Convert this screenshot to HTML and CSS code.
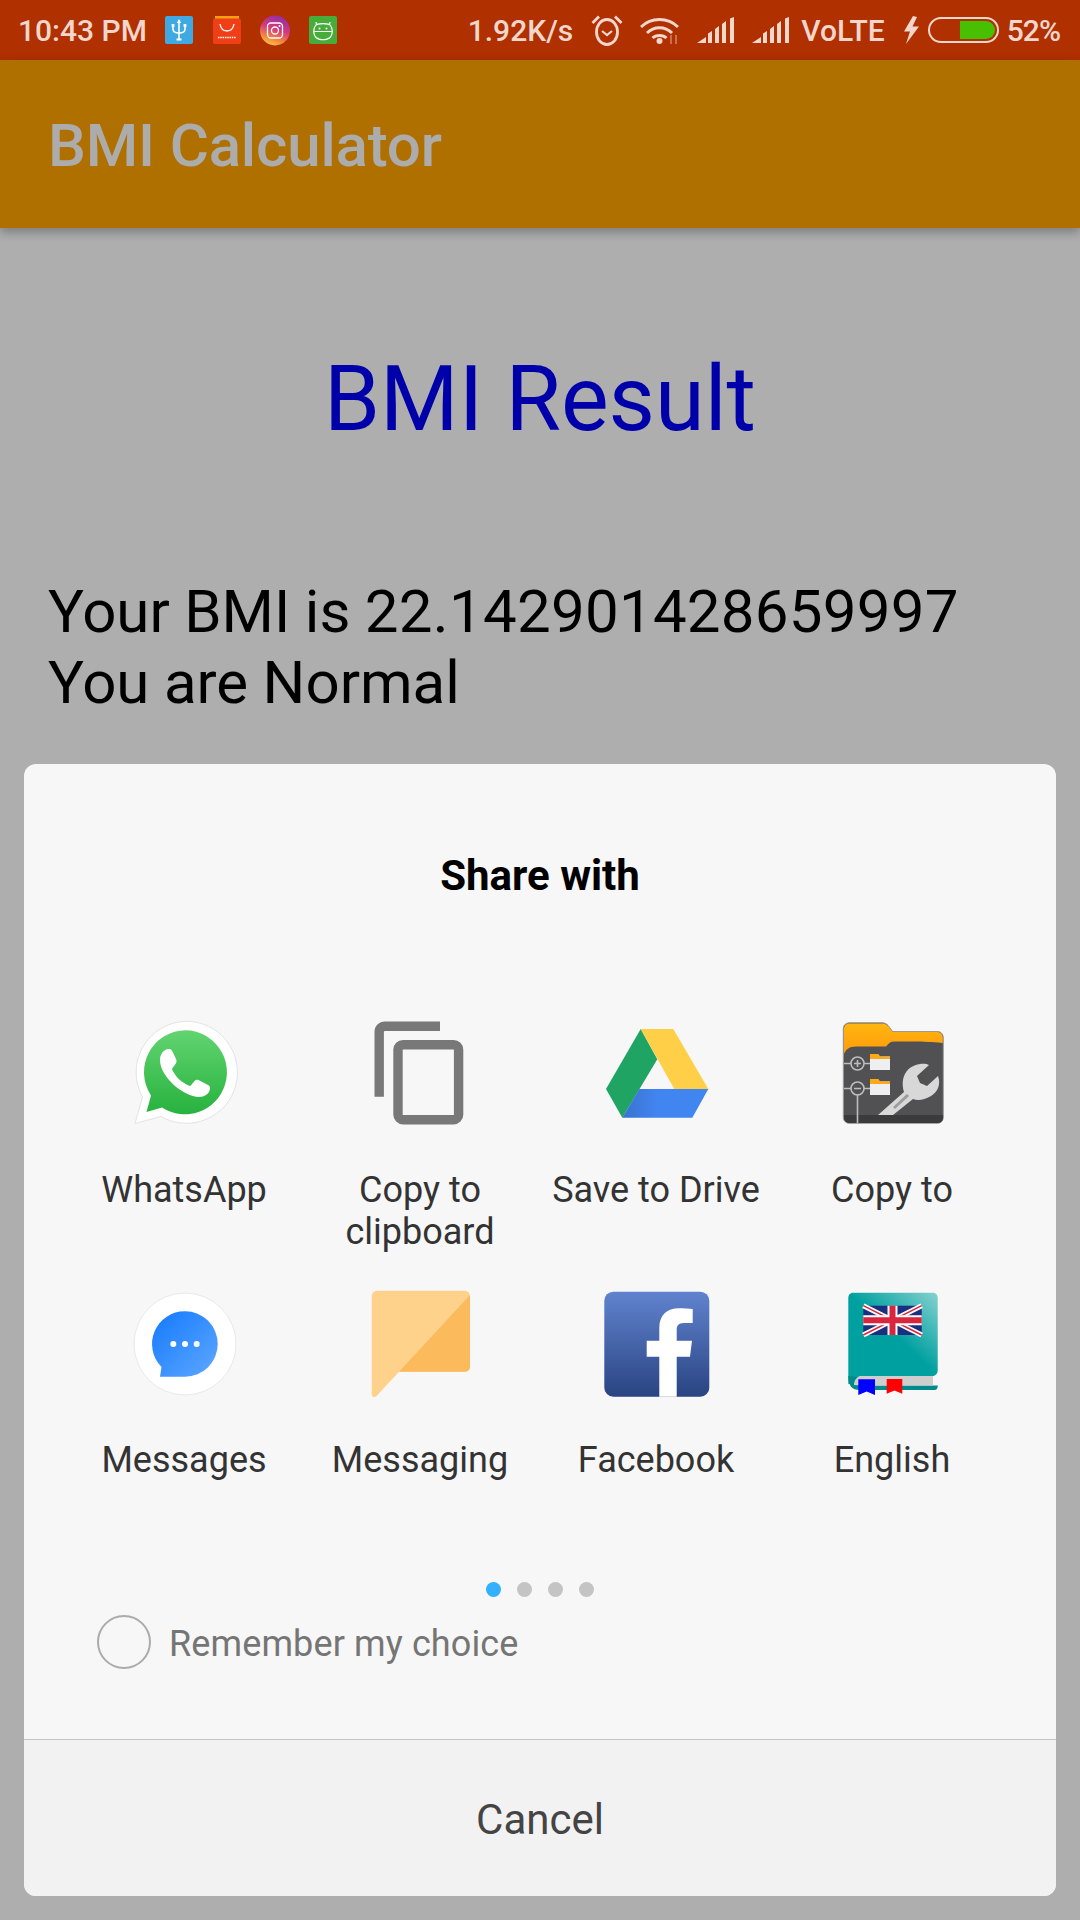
FILE: index.html
```html
<!DOCTYPE html>
<html lang="en">
<head>
<meta charset="utf-8">
<title>BMI Calculator</title>
<link rel="stylesheet" href="styles.css">
</head>
<body>
<div class="screen">
  <header class="status">
    <span class="time">10:43 PM</span>
    <div class="notif">
      <svg class="nicon" viewBox="0 0 28 28"><rect width="28" height="28" rx="2" fill="#3FA9E3"/><g fill="none" stroke="#fff" stroke-width="1.6"><path d="M14 4V23"/><path d="M8 10.5V13C8 16 11 17 14 17C17 17 20 16 20 13V10.5"/></g><path d="M14 3L16.2 7H11.8Z M6.6 8H9.4V11H6.6Z M18.6 8H21.4V11H18.6Z M11.5 22.5H16.5V24.5H11.5Z" fill="#fff"/></svg>
      <svg class="nicon" viewBox="0 0 28 28"><path d="M2 0H26V4H2Z" fill="#F9A011"/><rect y="2.5" width="28" height="25.5" rx="2" fill="#F03E16"/><path d="M7 8C8 14 11 15 14 15C17 15 20 14 21 8" fill="none" stroke="#fff" stroke-width="1.4"/><path d="M5 21.5H23" stroke="#fff" stroke-width="1.6" stroke-dasharray="1.5 .8"/></svg>
      <svg class="nicon nicon-ig" viewBox="0 0 30 31"><defs><linearGradient id="ig" x1=".7" y1="0" x2=".35" y2="1"><stop offset="0" stop-color="#8E2FA8"/><stop offset=".45" stop-color="#D5397C"/><stop offset=".8" stop-color="#F58D3B"/><stop offset="1" stop-color="#FBC34A"/></linearGradient></defs><circle cx="15" cy="15.5" r="15" fill="url(#ig)"/><rect x="7.5" y="8" width="15" height="15" rx="3.5" fill="none" stroke="#fff" stroke-width="1.3"/><circle cx="15" cy="15.5" r="3.5" fill="none" stroke="#fff" stroke-width="1.3"/><circle cx="19.5" cy="11" r="1" fill="#fff"/></svg>
      <svg class="nicon" viewBox="0 0 28 28"><rect width="28" height="28" rx="2" fill="#46AC3A"/><path d="M6.500 9.500C8 7 20 7 21.500 9.500C24 13 24 18 21 21.500C18 24.500 10 24.500 7 21.500C4 18 4 13 6.500 9.500ZM5.500 15.500H22.500M7.500 9L7 6M20.500 9L21 6" fill="none" stroke="#fff" stroke-width="1.2"/><circle cx="10.500" cy="12.500" r="1" fill="#fff"/><circle cx="17.500" cy="12.500" r="1" fill="#fff"/></svg>
    </div>
    <div class="sys">
      <span class="speed">1.92K/s</span>
      <svg class="alarm" viewBox="0 0 32 32"><g fill="none" stroke="#F3D6CC" stroke-width="2.800"><ellipse cx="16" cy="18" rx="10.500" ry="12.500"/><path d="M11 17L16 21L21 17" stroke-width="2.200"/><path d="M1.500 9L8 2.500M30.500 9L24 2.500"/></g></svg>
      <svg class="wifi" viewBox="0 0 39 28"><g fill="none" stroke="#F3D6CC" stroke-width="3"><path d="M1 11C11 1 28 1 38 11"/><path d="M7 17C14 10 25 10 32 17"/><path d="M12.500 22C16 18.500 23 18.500 26.500 22"/></g><circle cx="19.500" cy="25" r="3" fill="#F3D6CC"/><path d="M31 19V28M36 19V28" stroke="#CF6E4E" stroke-width="2"/></svg>
      <svg class="signal" viewBox="0 0 37 26"><path d="M0 26L9 20V26ZM11 26V16.500L15 14V26ZM18 26V12L22 9V26ZM25 26V7L29 4V26ZM33 26V1.500L37 0V26Z" fill="#F3D6CC"/></svg>
      <svg class="signal signal-two" viewBox="0 0 37 26"><path d="M0 26L9 20V26ZM11 26V16.500L15 14V26ZM18 26V12L22 9V26ZM25 26V7L29 4V26ZM33 26V1.500L37 0V26Z" fill="#F3D6CC"/></svg>
      <span class="volte">VoLTE</span>
      <svg class="bolt" viewBox="0 0 17 28"><path d="M10 0L1 15.500H7L3 28L16 10.500H9.500L14 1Z" fill="#F3D6CC"/></svg>
      <span class="battery"><span class="battery-fill"></span></span>
      <span class="pct">52%</span>
    </div>
  </header>
  <div class="appbar"><h1 class="apptitle">BMI Calculator</h1></div>
  <main class="content">
    <h2 class="result-title">BMI Result</h2>
    <p class="result-text">Your BMI is <span class="digits">22.142901428659997</span><br>You are Normal</p>
  </main>

  <section class="dialog">
    <h3 class="dialog-title">Share with</h3>
    <div class="apps">
      <div class="app">
        <svg class="app-icon" viewBox="0 0 120 120"><defs><linearGradient id="wa" x1="0" y1="0" x2="0" y2="1"><stop offset="0" stop-color="#62D470"/><stop offset="1" stop-color="#27B23E"/></linearGradient></defs><path d="M61.700 11.300A51 51 0 1 1 37 106.500L11 113.500L18.500 87A51 51 0 0 1 61.700 11.300Z" fill="#fff" stroke="#e3e3e3" stroke-width="1"/><path d="M61.700 20.300A42 42 0 1 1 38 97.500L22.500 102L27 85.500A42 42 0 0 1 61.700 20.300Z" fill="url(#wa)"/><path d="M44.500 39C46.500 39 47.500 39.500 48.500 41.500L52 49C53 51 52.500 52.500 51.500 54L48.500 58C48 59 48 59.500 48.500 60.500C52 67 57 72 64.500 75.500C65.500 76 66.500 76 67.200 75L70.500 71C71.500 69.700 73 69.300 74.500 70L84 75C85.500 75.800 86 76.500 86 78C86 84 80 87 75 87C60 87 36 67 36 50C36 44 40 39 44.500 39Z" fill="#fff"/></svg>
        <span class="app-label">WhatsApp</span>
      </div>
      <div class="app">
        <svg class="app-icon" viewBox="0 0 120 120"><g fill="none" stroke="#787878" stroke-width="9.400"><path d="M80 16.200H25C21.500 16.200 19.200 18.500 19.200 22V86.700"/><rect x="38" y="34.700" width="60.600" height="75" rx="5"/></g></svg>
        <span class="app-label">Copy to<br>clipboard</span>
      </div>
      <div class="app">
        <svg class="app-icon" viewBox="0 0 120 120"><defs><linearGradient id="dg" x1="0" y1="0" x2="1" y2="0"><stop offset="0" stop-color="#3A72D0"/><stop offset=".4" stop-color="#4185F0"/></linearGradient></defs><path d="M44.700 19L61.300 49.300L26.300 107.700L10 79Z" fill="#1FA463"/><path d="M44.700 19H77.300L112.300 79H78.300Z" fill="#FFCF47"/><path d="M43.300 79H112.300L96.300 107.700H26.300Z" fill="url(#dg)"/></svg>
        <span class="app-label">Save to Drive</span>
      </div>
      <div class="app">
        <svg class="app-icon" viewBox="0 0 120 120"><defs><linearGradient id="xo" x1="0" y1="0" x2="0" y2="1"><stop offset="0" stop-color="#FFB60F"/><stop offset="1" stop-color="#FF9A0C"/></linearGradient></defs><path d="M18 12.700H50C54 12.700 56 15 58 18L60.500 21.500H105C109 21.500 111.300 24 111.300 28V107C111.300 111 109 113.300 105 113.300H18C14 113.300 11.300 111 11.300 107V19C11.300 15 14 12.700 18 12.700Z" fill="#515153" stroke="#9a9a9a" stroke-width="1"/><path d="M18 13.500H50C54 13.500 56 15.500 58 18.500L60.500 22H105C108.500 22 110.800 24.500 110.800 28V33C100 31.500 70 31.500 62 31.500C57 31.500 56 35 54 36.500H24C17 36.500 13.500 40 12 44V19C12 15.500 14.500 13.500 18 13.500Z" fill="url(#xo)"/><path d="M12 105H111V107C111 111 109 113 105 113H18C14 113 12 111 12 107Z" fill="#3B3B3C"/><g fill="none" stroke="#bdbdbd" stroke-width="1.600"><circle cx="25.500" cy="53.500" r="6.500"/><circle cx="25.500" cy="78.500" r="6.500"/><path d="M12 53.500H19M32 53.500H38M12 78.500H19M32 78.500H38M25.500 85V113M22 53.500H29M25.500 50V57M22 78.500H29"/></g><path d="M38 44H46L48 46.500H58V60H38Z" fill="#EFEFEF"/><path d="M38 44H46L48 46.500H58V49H38Z" fill="#FFA91A"/><path d="M38 69H46L48 71.500H58V85H38Z" fill="#EFEFEF"/><path d="M38 69H46L48 71.500H58V74H38Z" fill="#FFA91A"/><path d="M46 105L72 82C68 68 74 56 88 54C92 53.500 95 54 97 55L85 66L88 73L95 76L106 66C109 74 106 82 99 86C92 90 86 91 81 89L61 105Z" fill="#D8D8D8"/><path d="M62 98L76 85" stroke="#9d9d9d" stroke-width="3"/></svg>
        <span class="app-label">Copy to</span>
      </div>
      <div class="app">
        <svg class="app-icon" viewBox="0 0 120 120"><defs><linearGradient id="ms" x1="0" y1="0" x2="1" y2="1"><stop offset="0" stop-color="#1379FF"/><stop offset="1" stop-color="#5FA8FF"/></linearGradient></defs><circle cx="61" cy="64" r="51" fill="#fff" stroke="#e9e9e9" stroke-width="1"/><path d="M61 31.300A32.700 32.700 0 1 1 61 96.700H36L37.500 87A32.700 32.700 0 0 1 61 31.300Z" fill="url(#ms)"/><circle cx="49.300" cy="64" r="3" fill="#fff"/><circle cx="61" cy="64" r="3" fill="#fff"/><circle cx="72.700" cy="64" r="3" fill="#fff"/></svg>
        <span class="app-label">Messages</span>
      </div>
      <div class="app">
        <svg class="app-icon" viewBox="0 0 120 120"><path d="M17.700 10.700H104C108 10.700 110 13 110 16.700V85.700C110 89.700 108 91.700 104 91.700H39L16.500 116C14 118 11.700 117 11.700 114V16.700C11.700 13 14 10.700 17.700 10.700Z" fill="#FFD28C"/><path d="M110 15V85.700C110 89.700 108 91.700 104 91.700H39Z" fill="#FBBA5C"/></svg>
        <span class="app-label">Messaging</span>
      </div>
      <div class="app">
        <svg class="app-icon" viewBox="0 0 120 120"><defs><linearGradient id="fb" x1="0" y1="0" x2="0" y2="1"><stop offset="0" stop-color="#6083CF"/><stop offset="1" stop-color="#2A4482"/></linearGradient></defs><rect x="8.300" y="11.700" width="105" height="105" rx="9" fill="url(#fb)"/><path d="M63.300 116.700V76.700H50.700V60.700H63.300V48C63.300 35 71 28.300 83 28.300C88 28.300 93 28.600 96.700 29V43H88C82 43 80.700 46 80.700 50V60.700H96L94 76.700H80.700V116.700Z" fill="#fff"/></svg>
        <span class="app-label">Facebook</span>
      </div>
      <div class="app">
        <svg class="app-icon" viewBox="0 0 120 120"><defs><linearGradient id="bk" x1="1" y1="0" x2=".55" y2=".5"><stop offset="0" stop-color="#86D2CF"/><stop offset="1" stop-color="#00A0A0"/></linearGradient></defs><path d="M21 12.700H101C104 12.700 105.700 15 105.700 18V90C105.700 94 103 96 100 96H30C25 96 22 100 22 104H16.300V18C16.300 15 18 12.700 21 12.700Z" fill="url(#bk)"/><path d="M16.300 96C16.300 106 20 110 28 110H103C105 110 106 107 105.700 105.500H30C25 105.500 23 101 26 97Z" fill="#008A8A"/><path d="M22 105C22 100 25 96 30 96H101V105.500H30Z" fill="#CECECE"/><g><rect x="31.300" y="25.700" width="58.400" height="29.300" fill="#1B2F80"/><path d="M31.300 25.700L89.700 55M89.700 25.700L31.300 55" stroke="#fff" stroke-width="5"/><path d="M31.300 25.700L89.700 55M89.700 25.700L31.300 55" stroke="#D9263C" stroke-width="1.500"/><path d="M60.500 25.700V55M31.300 40.300H89.700" stroke="#fff" stroke-width="10"/><path d="M60.500 25.700V55M31.300 40.300H89.700" stroke="#D9263C" stroke-width="6"/></g><path d="M26.300 99.300H43V115L34.700 111.500L26.300 115Z" fill="#0000FF"/><path d="M54.700 99H70.300V113.700L62.500 110.500L54.700 113.700Z" fill="#FF0000"/></svg>
        <span class="app-label">English</span>
      </div>
    </div>
    <div class="dots">
      <span class="dot dot-active"></span>
      <span class="dot"></span>
      <span class="dot"></span>
      <span class="dot"></span>
    </div>
    <div class="remember">
      <span class="radio"></span>
      <span class="remember-label">Remember my choice</span>
    </div>
    <div class="dialog-footer"><span class="cancel">Cancel</span></div>
  </section>
</div>
</body>
</html>
```
FILE: styles.css
```css
* { box-sizing: border-box; }
html, body { margin: 0; padding: 0; }
body { font-family: Roboto, "Liberation Sans", sans-serif; background: #AEAEAE; }
.screen { position: relative; width: 1080px; height: 1920px; overflow: hidden; background: #AEAEAE; display: flex; flex-direction: column; }

.status { height: 60px; flex: none; background: #B03000; color: #F3D6CC; display: flex; align-items: center; padding: 0 20px 0 18px; font-weight: 500; font-size: 30px; }
.time { width: 126px; white-space: nowrap; }
.notif { display: flex; align-items: center; margin-left: 21px; }
.nicon { width: 28px; height: 28px; display: block; margin-right: 20px; }
.nicon-ig { width: 30px; height: 31px; margin-right: 19px; margin-left: -1px; }
.sys { margin-left: auto; display: flex; align-items: center; }
.speed { white-space: nowrap; margin-right: 18px; }
.alarm { width: 32px; height: 32px; display: block; margin-right: 17px; }
.wifi { width: 39px; height: 28px; display: block; margin-right: 18px; }
.signal { width: 37px; height: 26px; display: block; }
.signal-two { margin-left: 18px; }
.volte { margin-left: 12px; white-space: nowrap; }
.bolt { width: 17px; height: 28px; display: block; margin-left: 18px; }
.battery { width: 71px; height: 26px; margin-left: 8px; border: 2px solid #F3D6CC; border-radius: 13px; display: flex; justify-content: flex-end; align-items: center; padding-right: 2px; }
.battery-fill { width: 35px; height: 18px; background: #46C000; border-radius: 0 9px 9px 0; }
.pct { margin-left: 8px; letter-spacing: -1px; white-space: nowrap; }

.appbar { height: 168px; flex: none; background: #B07000; display: flex; align-items: center; padding: 2px 0 0 48px; box-shadow: 0 4px 10px rgba(0,0,0,.3); position: relative; }
.apptitle { margin: 0; font-size: 60px; font-weight: 500; letter-spacing: -.15px; color: #ACACAC; }

.content { flex: 1; padding: 0 48px; }
.result-title { margin: 114px 0 0; font-size: 90px; line-height: 116px; font-weight: 400; color: #0000AA; text-align: center; }
.result-text { margin: 118px 0 0; font-size: 60px; line-height: 71px; word-spacing: -.4px; color: #000; }
.digits { letter-spacing: .27px; }

.dialog { position: absolute; left: 24px; top: 764px; width: 1032px; height: 1132px; background: #F7F7F7; border-radius: 12px; overflow: hidden; display: flex; flex-direction: column; }
.dialog-title { margin: 0; padding-top: 84px; height: 246px; font-size: 42px; line-height: 56px; font-weight: 700; text-align: center; color: #000; }
.apps { display: grid; grid-template-columns: repeat(4, 236px); grid-auto-rows: 270px; padding-left: 42px; }
.app { display: flex; flex-direction: column; align-items: center; }
.app-icon { width: 120px; height: 120px; display: block; flex: none; }
.app-label { margin-top: 39px; font-size: 36px; line-height: 42px; color: #333; text-align: center; white-space: nowrap; }

.dots { display: flex; justify-content: center; gap: 16px; margin-top: 32px; height: 15px; }
.dot { width: 15px; height: 15px; border-radius: 50%; background: #C4C4C4; }
.dot-active { background: #33B0FF; }

.remember { display: flex; align-items: center; gap: 18px; margin-top: 18px; padding-left: 73px; height: 54px; }
.radio { width: 54px; height: 54px; border-radius: 50%; border: 2px solid #ABABAB; flex: none; }
.remember-label { font-size: 36px; letter-spacing: .12px; color: #757575; white-space: nowrap; padding-top: 4px; }

.dialog-footer { margin-top: 70px; flex: 1; background: #F2F2F2; border-top: 1px solid #C4C4C4; display: flex; align-items: center; justify-content: center; }
.cancel { font-size: 42px; color: #444; padding-top: 2px; }
```
